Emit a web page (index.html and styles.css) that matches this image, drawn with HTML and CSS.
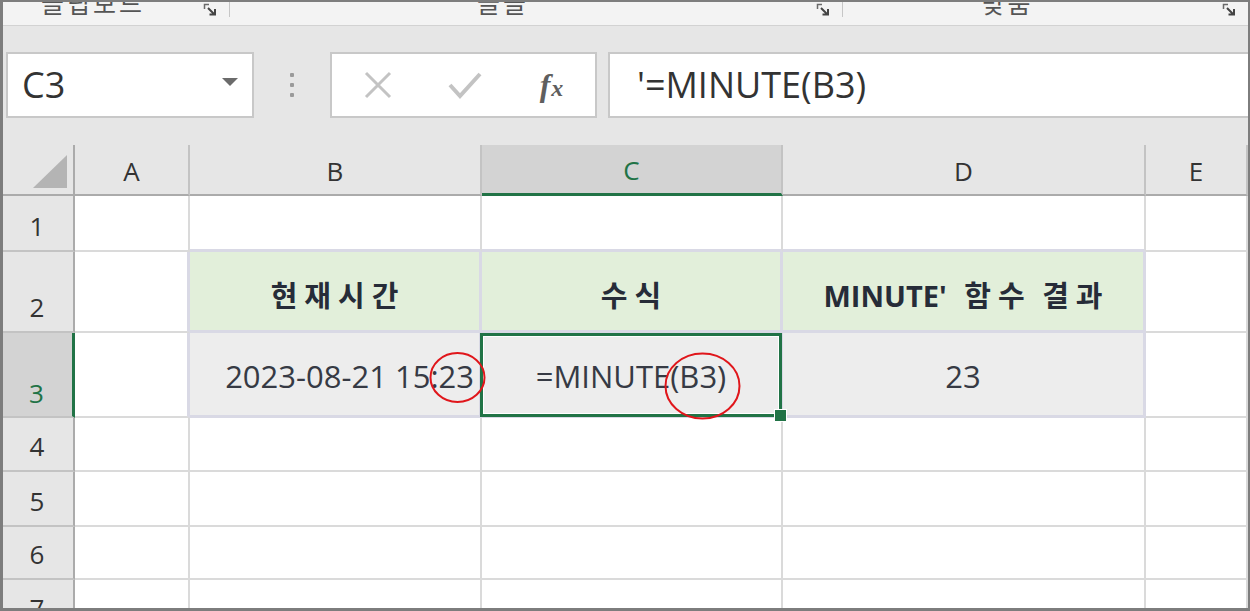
FILE: index.html
```html
<!DOCTYPE html>
<html lang="ko">
<head>
<meta charset="utf-8">
<title>MINUTE 함수</title>
<link rel="stylesheet" href="styles.css">
</head>
<body>
<div class="frame">
  <div class="ribbon">
    <div class="group g1">
      <span class="glabel">클립보드</span>
      <svg class="launcher" viewBox="0 0 14 14" width="14" height="14"><path d="M1.5 6V1.5H6" fill="none" stroke="#6a6a6a" stroke-width="1.5"/><path d="M5 5L11 11M6.5 11.5H12V6" fill="none" stroke="#444" stroke-width="2"/></svg>
      <span class="gsep"></span>
    </div>
    <div class="group g2">
      <span class="glabel">글꼴</span>
      <svg class="launcher" viewBox="0 0 14 14" width="14" height="14"><path d="M1.5 6V1.5H6" fill="none" stroke="#6a6a6a" stroke-width="1.5"/><path d="M5 5L11 11M6.5 11.5H12V6" fill="none" stroke="#444" stroke-width="2"/></svg>
      <span class="gsep"></span>
    </div>
    <div class="group g3">
      <span class="glabel">맞춤</span>
      <svg class="launcher" viewBox="0 0 14 14" width="14" height="14"><path d="M1.5 6V1.5H6" fill="none" stroke="#6a6a6a" stroke-width="1.5"/><path d="M5 5L11 11M6.5 11.5H12V6" fill="none" stroke="#444" stroke-width="2"/></svg>
    </div>
  </div>

  <div class="fbar">
    <div class="namebox">
      <span class="nbtext">C3</span>
      <span class="dd"></span>
    </div>
    <div class="vdots"><i></i><i></i><i></i></div>
    <div class="fbtns">
      <span class="slot">
        <svg viewBox="0 0 30 30" width="30" height="30"><path d="M3 3L27 27M27 3L3 27" stroke="#c3c3c3" stroke-width="3" fill="none"/></svg>
      </span>
      <span class="slot">
        <svg viewBox="0 0 34 30" width="34" height="30"><path d="M2 15L12 26L32 4" stroke="#c3c3c3" stroke-width="4" fill="none"/></svg>
      </span>
      <span class="slot fx"><i>f</i><i class="x">x</i></span>
    </div>
    <div class="finput">'=MINUTE(B3)</div>
  </div>

  <div class="sheet">
    <div class="ch corner"><span class="tri"></span></div>
    <div class="ch">A</div>
    <div class="ch">B</div>
    <div class="ch sel">C</div>
    <div class="ch">D</div>
    <div class="ch">E</div>

    <div class="rh">1</div>
    <div class="c"></div>
    <div class="c tb"></div>
    <div class="c tb"></div>
    <div class="c tb"></div>
    <div class="c"></div>

    <div class="rh">2</div>
    <div class="c tr"></div>
    <div class="c t th"><span><span class="kr">현재시간</span></span></div>
    <div class="c t th"><span><span class="kr">수식</span></span></div>
    <div class="c t th"><span>MINUTE' <span class="kr">함수</span> <span class="kr">결과</span></span></div>
    <div class="c"></div>

    <div class="rh rsel">3</div>
    <div class="c tr"></div>
    <div class="c t td right">2023-08-21 15:23</div>
    <div class="c t td active">=MINUTE(B3)<span class="handle"></span></div>
    <div class="c t td">23</div>
    <div class="c"></div>

    <div class="rh">4</div>
    <div class="c"></div><div class="c"></div><div class="c"></div><div class="c"></div><div class="c"></div>
    <div class="rh">5</div>
    <div class="c"></div><div class="c"></div><div class="c"></div><div class="c"></div><div class="c"></div>
    <div class="rh">6</div>
    <div class="c"></div><div class="c"></div><div class="c"></div><div class="c"></div><div class="c"></div>
    <div class="rh">7</div>
    <div class="c"></div><div class="c"></div><div class="c"></div><div class="c"></div><div class="c"></div>
  </div>
</div>
<svg class="marks" width="1250" height="611" viewBox="0 0 1250 611">
  <ellipse cx="457.5" cy="377.5" rx="27" ry="24.5" fill="none" stroke="#e0161b" stroke-width="2"/>
  <ellipse cx="702.5" cy="386" rx="37" ry="32.5" fill="none" stroke="#e0161b" stroke-width="2"/>
</svg>
</body>
</html>
```
FILE: styles.css
```css
* { box-sizing: border-box; }
html, body { margin: 0; padding: 0; }
body {
  position: relative;
  width: 1250px;
  height: 611px;
  overflow: hidden;
  background: #fff;
  font-family: "Open Sans", "Noto Sans CJK KR", sans-serif;
  color: #333;
}
.frame {
  width: 1250px;
  height: 611px;
  border: 2px solid #7d7d7d;
  border-left-width: 3px;
  border-bottom-width: 3px;
  display: flex;
  flex-direction: column;
  overflow: hidden;
}

/* ribbon group labels */
.ribbon {
  height: 24px;
  flex: none;
  background: #f3f3f3;
  border-bottom: 1px solid #d2d2d2;
  display: flex;
  overflow: hidden;
}
.group {
  display: flex;
  align-items: flex-start;
}
.g1 { width: 227px; }
.g2 { width: 613px; }
.g3 { flex: 1; }
.glabel {
  flex: 1;
  text-align: center;
  font-family: "Noto Sans CJK KR", sans-serif;
  font-size: 25px;
  line-height: 25px;
  margin-top: -12px;
  letter-spacing: 3px;
  color: #555;
}
.g1 .glabel { padding-right: 20px; }
.g2 .glabel { padding-right: 40px; }
.g3 .glabel { padding-right: 50px; }
.launcher { flex: none; margin-top: 1px; margin-right: 12px; }
.gsep {
  flex: none;
  width: 1px;
  height: 15px;
  background: #c6c6c6;
}

/* formula bar */
.fbar {
  height: 119px;
  flex: none;
  background: #e6e6e6;
  display: flex;
  align-items: flex-start;
  padding-top: 26px;
}
.namebox {
  width: 248px;
  height: 66px;
  margin-left: 3px;
  background: #fff;
  border: 2px solid #c8c8c8;
  display: flex;
  align-items: center;
  padding-left: 14px;
  padding-right: 14px;
}
.nbtext {
  flex: 1;
  font-size: 36px;
  color: #333;
  line-height: 1;
}
.dd {
  width: 0;
  height: 0;
  border-left: 8px solid transparent;
  border-right: 8px solid transparent;
  border-top: 8px solid #6b6b6b;
  margin-top: -6px;
}
.vdots {
  width: 76px;
  height: 66px;
  display: flex;
  flex-direction: column;
  align-items: center;
  justify-content: center;
  gap: 6px;
}
.vdots i {
  width: 4px;
  height: 4px;
  border-radius: 1px;
  background: #9a9a9a;
}
.fbtns {
  width: 267px;
  height: 66px;
  background: #fff;
  border: 2px solid #c8c8c8;
  display: flex;
  align-items: center;
  padding-left: 2px;
}
.slot {
  width: 88px;
  display: flex;
  justify-content: center;
  align-items: center;
}
.fx {
  font-family: "Liberation Serif", serif;
  font-style: italic;
  font-weight: bold;
  color: #5f5f5f;
  font-size: 32px;
  line-height: 1;
}
.fx i { font-style: italic; }
.fx .x { font-size: 24px; margin-left: 1px; margin-top: 6px; }
.finput {
  flex: 1;
  height: 66px;
  margin-left: 11px;
  background: #fff;
  border: 2px solid #c8c8c8;
  border-right: none;
  font-size: 36px;
  line-height: 62px;
  padding-left: 27px;
  color: #333;
}

/* sheet */
.sheet {
  flex: 1;
  min-height: 0;
  overflow: hidden;
  display: grid;
  grid-template-columns: 72px 115px 292px 301px 363px 1fr;
  grid-template-rows: 51px 56px 81px 85px 54px 55px 53px 54px;
  background: #fff;
}
.ch {
  background: #e6e6e6;
  border-right: 2px solid #c3c3c3;
  border-bottom: 2px solid #ababab;
  display: flex;
  align-items: center;
  justify-content: center;
  font-size: 26px;
  color: #333;
  padding-top: 2px;
}
.ch.corner {
  position: relative;
  border-right-color: #ababab;
}
.tri {
  position: absolute;
  left: 30px;
  top: 10px;
  width: 0;
  height: 0;
  border-left: 34px solid transparent;
  border-bottom: 33px solid #b4b4b4;
}
.ch.sel {
  background: #d3d3d3;
  border-bottom: 3px solid #217346;
  color: #217346;
}
.rh {
  background: #e6e6e6;
  border-right: 2px solid #ababab;
  border-bottom: 2px solid #c3c3c3;
  display: flex;
  align-items: flex-end;
  justify-content: center;
  font-size: 26px;
  line-height: 30px;
  padding-bottom: 9px;
  padding-right: 2px;
  color: #333;
}
.rh.rsel {
  background: #d3d3d3;
  border-right: 3px solid #217346;
  color: #217346;
  padding-bottom: 8px;
}
.c {
  border-right: 2px solid #dadada;
  border-bottom: 2px solid #dadada;
}
.c.tb { border-bottom: 3px solid #d9d9e5; }
.c.tr { border-right: 3px solid #d9d9e5; }
.c.t {
  border-right: 3px solid #d9d9e5;
  border-bottom: 3px solid #d9d9e5;
  display: flex;
  align-items: center;
  justify-content: center;
}
.th {
  background: #e2efda;
  font-weight: bold;
  font-size: 29px;
  color: #262c38;
  padding-top: 6px;
  white-space: pre;
  word-spacing: 10px;
}
.kr {
  font-family: "Noto Sans CJK KR", sans-serif;
  letter-spacing: 7px;
  margin-right: -7px;
}
.td {
  background: #ededed;
  font-size: 31px;
  color: #363a44;
  padding-top: 4px;
}
.td.right {
  justify-content: flex-end;
  padding-right: 5px;
}
.active {
  position: relative;
}
.active::after {
  content: "";
  position: absolute;
  left: -2px;
  top: 0;
  right: -2px;
  bottom: -2px;
  border: 3px solid #217346;
  box-shadow: inset 0 0 0 1px #fff;
}
.handle {
  position: absolute;
  right: -7px;
  bottom: -7px;
  width: 13px;
  height: 13px;
  background: #217346;
  border: 1px solid #fff;
  z-index: 2;
}
.marks {
  position: absolute;
  left: 0;
  top: 0;
  pointer-events: none;
}
```
